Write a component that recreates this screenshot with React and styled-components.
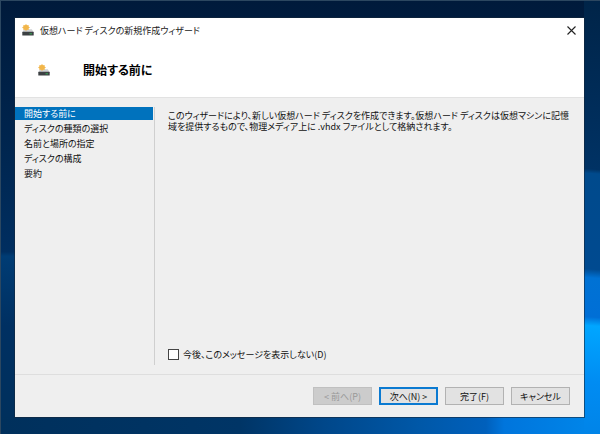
import React, { useState } from "react";
import styled, { createGlobalStyle } from "styled-components";

const GlobalStyle = createGlobalStyle`
  * {
    box-sizing: border-box;
  }
  body {
    margin: 0;
    font-family: "Noto Sans CJK JP", sans-serif;
    font-feature-settings: "palt";
    font-size: 9px;
    line-height: 13px;
    color: #111;
  }
`;

const Desktop = styled.div`
  display: flex;
  min-height: 100vh;
  padding: 18px 16px 17px 15px;
  background-color: #002a57;
  background-image:
    linear-gradient(#2c4760, #2c4760),
    linear-gradient(90deg, #2c4760, #2c4760),
    linear-gradient(184deg, #002448, #003264 39%, #004a8c 40%, #004a90 62%, #0072d4 64%, #006fd6 73%, #00a6ff 75%, #008cf2 88%, #0084e8),
    linear-gradient(90deg, #00305c, #003566 40%, #00478a 54%, #0058a8 70%, #0060bc 81%, #0075dc 84%, #0084e8 97%),
    linear-gradient(#001a3b, #002650 35%, #002e60 58%, #003c74 59%, #003062 75%, #00305c);
  background-size: 100% 1px, 1px 100%, 16px 100%, 100% 17px, 100% 100%;
  background-position: top, left, right, bottom, center;
  background-repeat: no-repeat;
`;
Desktop.displayName = "Desktop";

const Dialog = styled.main`
  display: flex;
  flex: 1;
  flex-direction: column;
  min-width: 0;
  background-color: #efefef;
  box-shadow: 0 0 0 1px rgb(20 40 60 / 60%);
`;
Dialog.displayName = "Dialog";

const TitleBar = styled.div`
  display: flex;
  align-items: center;
  gap: 6px;
  height: 24px;
  padding: 0 7px;
  background-color: white;
  color: #222;
`;

const TitleText = styled.span`
  flex: 1;
`;

const CloseButton = styled.button`
  display: flex;
  align-items: center;
  justify-content: center;
  width: 11px;
  height: 22px;
  padding: 0;
  border: 0;
  background: none;
  color: #222;
`;

const PageHeader = styled.header`
  display: flex;
  align-items: center;
  gap: 33px;
  height: 56px;
  padding: 0 23px;
  background-color: white;
  border-bottom: 1px solid #e2e2e2;
`;

const PageTitle = styled.h1`
  margin: 0;
  font-size: 12px;
  line-height: 18px;
  font-weight: 700;
  color: black;
`;

const Body = styled.div`
  display: flex;
  flex: 1;
  padding: 9px 0;
`;

const Steps = styled.ol`
  display: flex;
  flex-direction: column;
  gap: 2px;
  width: 140px;
  margin: 0;
  padding: 0 1px 0 0;
  border-right: 1px solid #cfcfcf;
  list-style: none;
`;

const Step = styled.li`
  padding-left: 9px;
  background-color: ${props => props.$active ? '#0072bd' : 'transparent'};
  color: ${props => props.$active ? 'white' : '#111'};
`;
Step.displayName = "Step";

const Content = styled.section`
  display: flex;
  flex: 1;
  flex-direction: column;
  justify-content: space-between;
  min-width: 0;
  padding: 3px 12px 4px 13px;
`;

const Description = styled.p`
  margin: 0;
  line-height: 11px;
  white-space: nowrap;
`;

const CheckLabel = styled.label`
  display: flex;
  align-items: center;
  gap: 4px;
`;

const CheckBox = styled.input`
  appearance: none;
  width: 11px;
  height: 11px;
  margin: 0;
  border: 1px solid #444;
  background-color: ${props => props.checked ? '#0072bd' : 'white'};
`;

const Footer = styled.footer`
  display: flex;
  justify-content: flex-end;
  gap: 7px;
  padding: 12px 14px;
  border-top: 1px solid #dedede;
`;

const WizardButton = styled.button`
  width: 59px;
  height: 18px;
  padding: 0;
  border: ${props => props.$primary ? '2px solid #0b7ad1' : '1px solid #b2b2b2'};
  background-color: #e2e2e2;
  color: #111;
  font: inherit;
  font-feature-settings: inherit;
  line-height: 13px;

  &:disabled {
    border-color: #c0c0c0;
    background-color: #cccccc;
    color: #999;
  }
`;
WizardButton.displayName = "WizardButton";

const steps = [
  "開始する前に",
  "ディスクの種類の選択",
  "名前と場所の指定",
  "ディスクの構成",
  "要約",
];

function DiskIcon() {
  return (
    <svg width="12" height="12" viewBox="0 0 12 12" aria-hidden="true">
      <path d="M2 5.200h7.800L11.500 8H.5z" fill="#cfd1d3" />
      <path
        d="M4 0l1 1.300 1.600-.4v1.600l1.300 1-1.300 1 .1 1.600-1.600-.4L4 7 3 5.700l-1.600.4V4.500L.1 3.500l1.300-1V.9L3 1.300z"
        fill="#f2b64a"
      />
      <rect x="0.300" y="7.800" width="11.400" height="3.800" rx="0.400" fill="#3c4043" />
      <rect x="7.500" y="9.300" width="2.500" height="1" fill="#36a852" />
    </svg>
  );
}

function App() {
  const [hideNextTime, setHideNextTime] = useState(false);

  return (
    <>
      <GlobalStyle />
      <Desktop>
        <Dialog>
          <TitleBar>
            <DiskIcon />
            <TitleText>仮想ハード ディスクの新規作成ウィザード</TitleText>
            <CloseButton type="button" aria-label="閉じる">
              <svg width="9" height="9" viewBox="0 0 9 9">
                <path d="M.5 .5l8 8M8.500 .5l-8 8" stroke="currentColor" strokeWidth="1.100" />
              </svg>
            </CloseButton>
          </TitleBar>
          <PageHeader>
            <DiskIcon />
            <PageTitle>開始する前に</PageTitle>
          </PageHeader>
          <Body>
            <Steps>
              {steps.map((step, i) => (
                <Step key={step} $active={i === 0}>{step}</Step>
              ))}
            </Steps>
            <Content>
              <Description>
                このウィザードにより、新しい仮想ハード ディスクを作成できます。仮想ハード ディスクは仮想マシンに記憶
                <br />
                域を提供するもので、物理メディア上に .vhdx ファイルとして格納されます。
              </Description>
              <CheckLabel>
                <CheckBox
                  type="checkbox"
                  checked={hideNextTime}
                  onChange={e => setHideNextTime(e.target.checked)}
                />
                今後、このメッセージを表示しない(D)
              </CheckLabel>
            </Content>
          </Body>
          <Footer>
            <WizardButton type="button" disabled>&lt; 前へ(P)</WizardButton>
            <WizardButton type="button" $primary>次へ(N) &gt;</WizardButton>
            <WizardButton type="button">完了(F)</WizardButton>
            <WizardButton type="button">キャンセル</WizardButton>
          </Footer>
        </Dialog>
      </Desktop>
    </>
  );
}

export default App;
